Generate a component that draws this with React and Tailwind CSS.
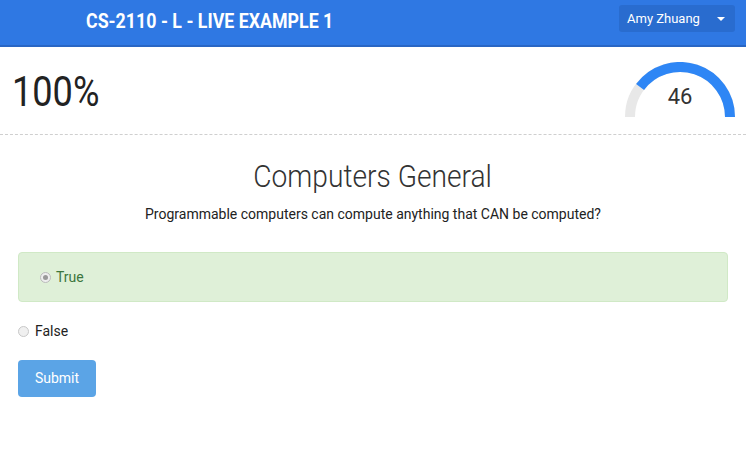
import React from "react";

function Gauge() {
  const cx = 55, cy = 55, r = 50;
  const a = (37 * Math.PI) / 180;
  const sx = cx - r * Math.cos(a);
  const sy = cy - r * Math.sin(a);
  return (
    <div className="relative w-[110px] h-[56px]">
      <svg width="110" height="56" viewBox="0 0 110 56" className="absolute inset-0">
        <path d={`M 5 55 A 50 50 0 0 1 105 55`} fill="none" stroke="#e8e8e8" strokeWidth="10" />
        <path d={`M ${sx} ${sy} A 50 50 0 0 1 105 55`} fill="none" stroke="#2e86f5" strokeWidth="10" />
      </svg>
      <div className="absolute left-0 right-0 top-[24px] text-center text-[22px] leading-none text-[#333]">46</div>
    </div>
  );
}

export default function App() {
  return (
    <div className="w-[746px] h-[474px] bg-white font-['Roboto',sans-serif] text-[#333]">
      <div className="h-[47px] bg-[#2f78e3] border-b-2 border-[#2966c4] flex items-start justify-between">
        <div className="pl-[86px] pt-[6px] text-white font-bold text-[20px]">
          <span className="inline-block origin-left scale-x-[0.89] whitespace-nowrap">CS-2110 - L - LIVE EXAMPLE 1</span>
        </div>
        <div className="mr-[11px] mt-[5px] w-[116px] h-[27px] rounded-[3px] bg-[#296ccf] flex items-center justify-between pl-[8px] pr-[10px] text-white text-[13px]">
          <span>Amy Zhuang</span>
          <span className="w-0 h-0 border-l-[4px] border-r-[4px] border-t-[4px] border-l-transparent border-r-transparent border-t-white" />
        </div>
      </div>
      <div className="h-[88px] border-b border-dashed border-[#cfcfcf] flex items-start justify-between">
        <div className="pl-[12px] pt-[24px] text-[42px] leading-none text-[#222]">
          <span className="inline-block origin-left scale-x-[0.86]">100%</span>
        </div>
        <div className="mr-[11px] mt-[15px]"><Gauge /></div>
      </div>
      <div className="text-center pt-[25px] text-[32px] font-light leading-none text-[#333]">
        <span className="inline-block scale-x-[0.88] whitespace-nowrap">Computers General</span>
      </div>
      <div className="text-center pt-[15px] text-[14px] leading-none text-[#222]">Programmable computers can compute anything that CAN be computed?</div>
      <div className="px-[18px] pt-[31px]">
        <div className="h-[50px] rounded-[4px] bg-[#dff0d8] border border-[#d0e9c6] flex items-center pl-[21px] text-[#3c763d] text-[14px]">
          <span className="w-[11px] h-[11px] rounded-full border border-[#bbb] bg-[#eee] flex items-center justify-center mr-[5px]">
            <span className="w-[5px] h-[5px] rounded-full bg-[#999]" />
          </span>
          True
        </div>
        <div className="flex items-center mt-[19px] text-[14px] text-[#222]">
          <span className="w-[11px] h-[11px] rounded-full border border-[#c8c8c8] bg-[#f0f0f0] mr-[6px]" />
          False
        </div>
        <div className="mt-[18px] w-[78px] h-[37px] rounded-[4px] bg-[#5ba4e6] text-white text-[14px] flex items-center justify-center">Submit</div>
      </div>
    </div>
  );
}
